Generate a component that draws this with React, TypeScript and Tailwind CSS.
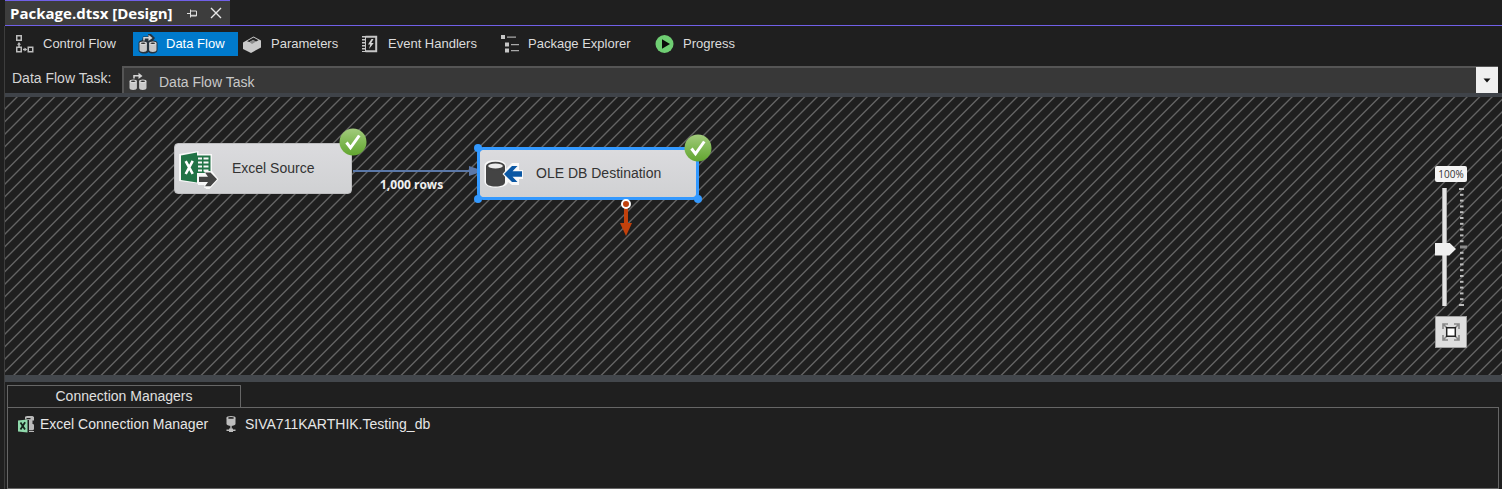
import { useState } from "react";

function ControlFlowIcon() {
  return (
    <svg width="20" height="20" viewBox="0 0 20 20" fill="none" stroke="#bdbdbd" strokeWidth="1.5" aria-hidden="true">
      <path d="M1.75 1.75h4.5v4.5h-4.5zM1.75 13.25h4.5v4.5h-4.5zM13.25 13.25h4.5v4.5h-4.5z" />
      <path d="M4 10v3M8 15.5h2" />
      <path d="M2 10.800 4 8l2 2.800zM9.500 13.500l2.800 2-2.800 2z" fill="#bdbdbd" stroke="none" />
    </svg>
  );
}

function DataFlowIcon({ halo = false }: { halo?: boolean }) {
  return (
    <svg width="20" height="20" viewBox="0 0 20 20" aria-hidden="true">
      {halo && (
        <path d="M5 2.5h5V0h3l4 4-2 2.500c2.500 0 4.500 1 4.500 2.500v7c0 2-2 3.500-4.500 3.500-2 0-3.500-.5-4.500-1.500-1 1-2.500 1.500-4.500 1.500C3 19.500.5 18 .5 16V9C.5 7.500 2.500 6.500 4 6.300z" fill="#26323c" />
      )}
      <path d="M6 6.500V3.800h6.500" fill="none" stroke="#d6d6d6" strokeWidth="1.500" />
      <path d="M10.500.8 14.500 4l-4 3z" fill="#d6d6d6" />
      <path d="M1.500 9.500v6.500c0 1.200 1.500 2 3.700 2s3.700-.8 3.700-2V9.500zM11.100 9.500v6.500c0 1.200 1.500 2 3.700 2s3.700-.8 3.700-2V9.500z" fill="#c8c8c8" />
      <ellipse cx="5.200" cy="9.300" rx="3.700" ry="1.900" fill="#d9d9d9" />
      <ellipse cx="14.800" cy="9.300" rx="3.700" ry="1.900" fill="#d9d9d9" />
      <ellipse cx="5.200" cy="9.300" rx="2.400" ry=".7" fill="#2a2a2a" />
      <ellipse cx="14.800" cy="9.300" rx="2.400" ry=".7" fill="#2a2a2a" />
    </svg>
  );
}

function ParametersIcon() {
  return (
    <svg width="20" height="20" viewBox="0 0 20 20" aria-hidden="true">
      <path d="M0 8.500 10.500 2.500l7.500 4v7L8 19l-8-4z" fill="#c9c9c9" />
      <path d="M4 7.300 10.500 3.500l5 2.700-2.500 1.300-3-1.500-3.500 2z" fill="#222" />
      <path d="m6.500 8 3.500-2 3 1.500L9 10z" fill="#8a8a8a" />
    </svg>
  );
}

function EventHandlersIcon() {
  return (
    <svg width="20" height="20" viewBox="0 0 20 20" fill="none" aria-hidden="true">
      <path d="M5.500 2.800h10.700v14.400H5.500" stroke="#c6c6c6" strokeWidth="2" />
      <path d="M5.500 2v16" stroke="#c6c6c6" strokeWidth="1" />
      <path d="M3.500 2v16" stroke="#c6c6c6" strokeWidth="3" strokeDasharray="1.500 1.500" />
      <path d="M11.500 5 8 10.500h2.300L9 15l4.700-6h-2.500L13.500 5z" fill="#d5d5d5" />
    </svg>
  );
}

function ExplorerIcon() {
  return (
    <svg width="20" height="20" viewBox="0 0 20 20" aria-hidden="true">
      <path d="M1 1h4v4H1zM5 8.500h4v4H5zM5 14.500h4v4H5z" fill="#c6c6c6" />
      <path d="M7 2.500h9v1.300H7zM11 10h8v1.300h-8zM11 16h8v1.300h-8z" fill="#a9a9a9" />
    </svg>
  );
}

function ProgressIcon() {
  return (
    <svg width="20" height="20" viewBox="0 0 20 20" aria-hidden="true">
      <circle cx="9.500" cy="10" r="9" fill="#6fce73" />
      <path d="M7 5.200v9.600l8-4.800z" fill="#0b0b0b" />
    </svg>
  );
}

function ExcelSourceIcon() {
  return (
    <svg width="40" height="40" viewBox="0 0 40 40" aria-hidden="true">
      <path d="M0 5 19.500 2v3H33v17l6.500 8.300-9 9.700H27l-2-4h-6v-1.500L0 32z" fill="#f8f8f8" />
      <path d="M18 6.500h13.500V24H18z" fill="#217346" />
      <path d="M19 8.500h4v2h-4zM24.500 8.500h5v2h-5zM19 12.500h4v2h-4zM24.500 12.500h5v2h-5zM19 16.500h4v2h-4zM24.500 16.500h5v2h-5zM19 20.500h4v2h-4zM24.500 20.500h5v2h-5z" fill="#f8f8f8" />
      <path d="M2 6.500 18 3.500v30L2 31z" fill="#217346" />
      <path d="m6.700 12.200 7 12.600M13.700 11.800 6.700 25" stroke="#fff" strokeWidth="2.600" fill="none" />
      <path d="M18.500 25.500h8.200L25 22h6.500l7.500 8.300-8 8.700h-6l2-4h-8.500z" fill="#f8f8f8" />
      <path d="M20 27.700h9L26 23.500h5.500l6.500 6.800-6.500 6.900H26l3-4.200h-9z" fill="#444" />
    </svg>
  );
}

function DatabaseDestinationIcon() {
  return (
    <svg width="40" height="28" viewBox="0 0 40 28" aria-hidden="true">
      <path d="M.5 6C.5 2 5 .3 11 .3S22 2 22 6v3l6-6h7v7h4v9h-4v6h-7l-4-3c-1 4-6 5.700-12.500 5.700S.5 25 .5 22z" fill="#f8f8f8" />
      <path d="M2 6v16c0 3 4 4.500 9.500 4.500S21 25 21 22V6z" fill="#444" />
      <ellipse cx="11.500" cy="6" rx="9.500" ry="4.300" fill="#444" />
      <ellipse cx="11.500" cy="6" rx="7.300" ry="2.600" fill="#eee" />
      <path d="M18.500 14 27 4.500h4V10h8v8h-8v5.500h-4z" fill="#f8f8f8" />
      <path d="m20 14 8-8h5.500l-5 5.300H38v5.400h-9.500l5 5.300H28z" fill="#0a57a4" />
    </svg>
  );
}

function SuccessBadge() {
  return (
    <svg width="28" height="28" viewBox="0 0 28 28" role="img" aria-label="Success">
      <defs>
        <linearGradient id="badge" x1="0" y1="0" x2="0" y2="1">
          <stop offset="0" stopColor="#a3cb7d" />
          <stop offset=".5" stopColor="#80b854" />
          <stop offset="1" stopColor="#62a52f" />
        </linearGradient>
      </defs>
      <circle cx="14" cy="14" r="13.500" fill="url(#badge)" />
      <path d="m7.500 14.500 4 5.300L20.300 7.500" fill="none" stroke="#fff" strokeWidth="3" />
    </svg>
  );
}

function ExcelConnectionIcon() {
  return (
    <svg width="18" height="18" viewBox="0 0 18 18" aria-hidden="true">
      <path d="M7 3.500V1.800L9 1h5.500L16 2v3.500h-1.500V9c1.200 0 1.500.5 1.500 1.500v3c0 1-.6 1.700-1.500 1.700H11V5L7 4.500z" fill="#b9b9b9" />
      <path d="M8.500 3h4v1.200h-4z" fill="#222" />
      <path d="M11 16.500h5" stroke="#b9b9b9" />
      <path d="M0 5.500 9.500 4.500v13L0 16.500z" fill="#8fd9ab" />
      <path d="m2.500 7.500 4.500 7M7.100 7.300 2.500 14.500" stroke="#17251c" strokeWidth="1.800" />
    </svg>
  );
}

function DatabaseConnectionIcon() {
  return (
    <svg width="12" height="18" viewBox="0 0 12 18" aria-hidden="true">
      <path d="M1.500 2.800v6c0 1.300 2 2.200 4.500 2.200s4.500-.9 4.500-2.200v-6z" fill="#bdbdbd" />
      <ellipse cx="6" cy="2.800" rx="4.500" ry="1.900" fill="#bdbdbd" />
      <ellipse cx="6" cy="2.900" rx="3" ry=".9" fill="#222" />
      <path d="M5.300 11h1.400v3H5.300zM4 13.500h4v3.500H4zM1.500 14.600h9V16h-9z" fill="#bdbdbd" />
    </svg>
  );
}

const tabs = [
  { label: "Control Flow", icon: <ControlFlowIcon />, width: "w-[123px]" },
  { label: "Data Flow", icon: <DataFlowIcon halo />, width: "w-[105px]" },
  { label: "Parameters", icon: <ParametersIcon />, width: "w-[117px]" },
  { label: "Event Handlers", icon: <EventHandlersIcon />, width: "w-[140px]" },
  { label: "Package Explorer", icon: <ExplorerIcon />, width: "w-[155px]" },
  { label: "Progress", icon: <ProgressIcon />, width: "w-[105px]" },
];

function DesignerTabs() {
  const [active, setActive] = useState("Data Flow");
  return (
    <nav className="flex h-9 items-center pl-[5px] text-[13px] text-[#dcdcdc]">
      {tabs.map((tab) => (
        <button
          key={tab.label}
          type="button"
          aria-pressed={active === tab.label}
          onClick={() => setActive(tab.label)}
          className={`flex h-6 shrink-0 items-center gap-2 whitespace-nowrap px-[5px] ${tab.width} ${
            active === tab.label ? "bg-[#007acc] text-white" : ""
          }`}
        >
          <span className="shrink-0">{tab.icon}</span>
          {tab.label}
        </button>
      ))}
    </nav>
  );
}

function TaskPicker() {
  return (
    <div className="flex h-8 items-start border-b-4 border-[#3f4349] pr-1">
      <label htmlFor="task" className="w-[117px] shrink-0 pt-px pl-[7px] text-[14px] leading-6 text-[#d4d4d4]">
        Data Flow Task:
      </label>
      <div className="relative mt-px h-[27px] flex-1">
        <select
          id="task"
          className="h-full w-full appearance-none border-t-2 border-l-2 border-[#555] bg-[#383838] pt-[3px] pl-[35px] text-[14px] text-[#c8c8c8] outline-none"
        >
          <option>Data Flow Task</option>
        </select>
        <span className="pointer-events-none absolute top-1.5 left-1.5">
          <DataFlowIcon />
        </span>
        <span className="pointer-events-none absolute top-px right-0 flex h-[26px] w-[22px] items-center justify-center bg-[#f0f0f0]">
          <svg width="8" height="5" viewBox="0 0 8 5" aria-hidden="true">
            <path d="M.5.5h7L4 4.500z" fill="#111" />
          </svg>
        </span>
      </div>
    </div>
  );
}

function ZoomControl() {
  const [zoom, setZoom] = useState(48);
  return (
    <div className="absolute top-[69px] right-[35px] flex w-8 flex-col items-start">
      <label
        htmlFor="zoom"
        className="flex h-4 w-full items-center justify-center rounded-xs bg-[#f4f4f4] font-['Open_Sans',sans-serif] text-[10px] text-[#333]"
      >
        100%
      </label>
      <div className="mt-1.5 flex h-[118px] w-full justify-between">
        <input
          id="zoom"
          type="range"
          min={0}
          max={100}
          value={zoom}
          onChange={(event) => setZoom(Number(event.target.value))}
          className="h-full w-[21px] appearance-none bg-[linear-gradient(90deg,transparent_7px,#aaa_7px,#aaa_8px,#e4e4e4_8px,#e4e4e4_11px,#aaa_11px,#aaa_12px,transparent_12px)] [direction:rtl] [writing-mode:vertical-lr] [&::-webkit-slider-thumb]:h-[13px] [&::-webkit-slider-thumb]:w-[21px] [&::-webkit-slider-thumb]:appearance-none [&::-webkit-slider-thumb]:bg-[#f0f0f0] [&::-webkit-slider-thumb]:[clip-path:polygon(0_0,68%_0,100%_50%,68%_100%,0_100%)]"
        />
        <svg width="8" height="118" viewBox="0 0 8 118" aria-hidden="true">
          {Array.from({ length: 21 }, (_, i) => (
            <path
              key={i}
              d={`M${i % 20 === 0 ? 0 : 1} ${1 + i * 5.800}h${i % 20 === 0 ? 5 : i === 10 ? 7 : 3.500}`}
              stroke={i === 10 ? "#8a8a8a" : "#bcbcbc"}
              strokeWidth={i === 10 ? 3 : 2}
            />
          ))}
        </svg>
      </div>
      <button
        type="button"
        aria-label="Zoom to fit"
        className="mt-2.5 flex size-8 items-center justify-center border border-[#a0a0a0] bg-[#dedede]"
      >
        <svg width="18" height="18" viewBox="0 0 18 18" fill="none" aria-hidden="true">
          <path d="M1 6V1h5M12 1h5v5M17 12v5h-5M6 17H1v-5M1 1l4 4M17 1l-4 4M17 17l-4-4M1 17l4-4" stroke="#888" strokeWidth="1.600" />
          <path d="M4.700 4.700h8.600v8.600H4.700z" fill="#fff" stroke="#222" strokeWidth="1.500" />
        </svg>
      </button>
    </div>
  );
}

function Canvas() {
  return (
    <main className="relative h-[278px] overflow-hidden bg-[#1f1f1f] text-[14px] text-[#333]">
      <svg className="absolute inset-0 h-full w-full" aria-hidden="true">
        <defs>
          <pattern id="hatch" width="25" height="25" patternUnits="userSpaceOnUse">
            <path d="M-3 2.500 2.500-3M-3 15 15-3M-3 27.500 27.500-3M9 28 28 9M22 27.500 27.500 22" stroke="#636363" strokeWidth="1.400" />
          </pattern>
        </defs>
        <rect width="100%" height="100%" fill="url(#hatch)" />
        <path d="M348 74h117" stroke="#5b78a8" strokeWidth="2" />
        <path d="M464 69v10l9-3v-4z" fill="#5b78a8" />
      </svg>

      <section className="absolute top-[46px] left-[169px] flex h-[51px] w-[178px] items-center rounded-sm border border-[#bdbdbf] bg-linear-to-b from-[#dbdbde] to-[#d0d1d3] pl-1">
        <ExcelSourceIcon />
        <span className="ml-[13px]">Excel Source</span>
        <span className="absolute -top-4 -right-4">
          <SuccessBadge />
        </span>
      </section>

      <span className="absolute top-[80px] left-[375px] font-['Open_Sans',sans-serif] text-[12px] leading-4 font-bold text-[#f0f0f0]">
        1,000 rows
      </span>

      <section className="absolute top-[50px] left-[472px] flex h-[53px] w-[222px] items-center rounded-md border-3 border-[#3399ff] bg-linear-to-b from-[#dbdbde] to-[#d0d1d3] pl-1">
        <DatabaseDestinationIcon />
        <span className="ml-3">OLE DB Destination</span>
        <i className="absolute -top-1.5 -left-1.5 size-2 rounded-full bg-[#3399ff]" />
        <i className="absolute -bottom-1.5 -left-1.5 size-2 rounded-full bg-[#3399ff]" />
        <i className="absolute -right-1.5 -bottom-1.5 size-2 rounded-full bg-[#3399ff]" />
        <span className="absolute -top-4 -right-4">
          <SuccessBadge />
        </span>
      </section>

      <svg className="absolute top-[101px] left-[614px]" width="14" height="39" viewBox="0 0 14 39" aria-hidden="true">
        <path d="M7 8v20" stroke="#c2410c" strokeWidth="4" />
        <path d="M1 25h12L7 38z" fill="#c2410c" />
        <circle cx="7" cy="6" r="4" fill="#c2410c" stroke="#fff" strokeWidth="2" />
      </svg>

      <ZoomControl />
    </main>
  );
}

function ConnectionManagers() {
  return (
    <section className="flex flex-1 flex-col border-t-[7px] border-[#43474c] pt-[3px] pr-[3px] pl-[2px]">
      <h2 className="h-[22px] w-[234px] border border-b-0 border-[#666] text-center text-[14px] leading-5 text-[#e0e0e0]">
        Connection Managers
      </h2>
      <ul className="flex flex-1 items-start border border-[#666] pt-1.5 pl-2.5 text-[14px] leading-5 text-[#e6e6e6]">
        <li className="flex w-[207px] items-center gap-1">
          <ExcelConnectionIcon />
          Excel Connection Manager
        </li>
        <li className="flex items-center gap-2">
          <DatabaseConnectionIcon />
          SIVA711KARTHIK.Testing_db
        </li>
      </ul>
    </section>
  );
}

export default function App() {
  return (
    <div className="flex min-h-screen flex-col bg-[#1f1f1f] font-['Liberation_Sans',Arial,sans-serif]">
      <header className="ml-[5px] flex h-[26px] border-b border-[#7160e8]">
        <div className="flex w-[225px] items-center border-t border-[#7160e8] bg-[#3d3d3d] pl-[5px] text-white">
          <span className="w-[176px] font-['Open_Sans',sans-serif] text-[15px] font-bold">Package.dtsx [Design]</span>
          <button type="button" aria-label="Pin tab" className="mr-3">
            <svg width="12" height="12" viewBox="0 0 12 12" fill="none" stroke="#e0e0e0" aria-hidden="true">
              <path d="M1 6.500h3.500M4.500 2.500v8M4.500 4h6v5h-6M4.500 8.300h6" />
            </svg>
          </button>
          <button type="button" aria-label="Close tab">
            <svg width="12" height="12" viewBox="0 0 12 12" stroke="#e8e8e8" strokeWidth="1.400" aria-hidden="true">
              <path d="m1 1 10 10M11 1 1 11" />
            </svg>
          </button>
        </div>
      </header>
      <div className="ml-1 flex flex-1 flex-col border-l border-[#3d3d3d]">
        <DesignerTabs />
        <div className="h-[3px]" />
        <TaskPicker />
        <Canvas />
        <ConnectionManagers />
      </div>
    </div>
  );
}
